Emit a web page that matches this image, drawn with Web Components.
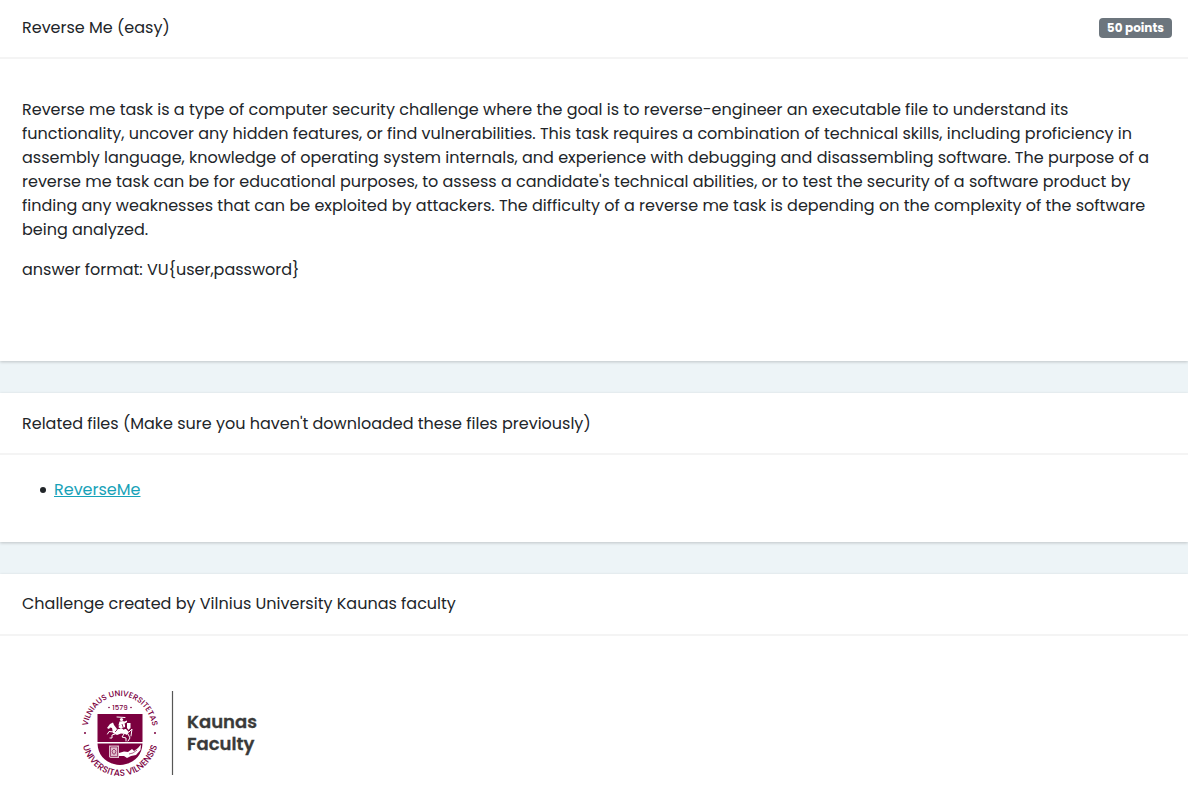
<!DOCTYPE html>
<html lang="en">
<head>
<meta charset="utf-8">
<title>Reverse Me (easy)</title>
<style>
body { margin: 0; background: #edf4f7; color: #212529; font: 16px/24px Poppins, Inter, "Open Sans", sans-serif; }
</style>
</head>
<body>
<challenge-page></challenge-page>

<template id="page-template">
  <style>
    :host { display: flex; flex-direction: column; gap: 32px; min-height: 100vh; }
    p { margin: 0 0 16px; }
    ul { margin: 0 0 16px; padding-left: 18px; list-style: none; }
    li { display: flex; align-items: center; gap: 8px; }
    li::before { content: ""; width: 6px; height: 6px; border-radius: 50%; background: currentColor; }
    a { color: #17a2b8; text-decoration: underline; }
    .description { padding: 17px 0 38px; }
    info-card:first-of-type { --header-padding: 16px 16px 17px 22px; }
    .files { --header-padding: 19px 16px 17px 22px; --body-padding: 23px 22px 24px; }
    info-card:last-of-type { flex: 1; }
    faculty-logo { margin: 22px 0 0 48px; }
  </style>
  <info-card>
    <span slot="title">Reverse Me (easy)</span>
    <points-badge slot="extra">50 points</points-badge>
    <div class="description">
      <p>Reverse me task is a type of computer security challenge where the goal is to reverse-engineer an executable file to understand its
      functionality, uncover any hidden features, or find vulnerabilities. This task requires a combination of technical skills, including proficiency in
      assembly language, knowledge of operating system internals, and experience with debugging and disassembling software. The purpose of a
      reverse me task can be for educational purposes, to assess a candidate's technical abilities, or to test the security of a software product by
      finding any weaknesses that can be exploited by attackers. The difficulty of a reverse me task is depending on the complexity of the software
      being analyzed.</p>
      <p>answer format: VU{user,password}</p>
    </div>
  </info-card>
  <info-card class="files">
    <span slot="title">Related files (Make sure you haven't downloaded these files previously)</span>
    <ul><li><a href="#ReverseMe">ReverseMe</a></li></ul>
  </info-card>
  <info-card>
    <span slot="title">Challenge created by Vilnius University Kaunas faculty</span>
    <faculty-logo></faculty-logo>
  </info-card>
</template>

<template id="card-template">
  <style>
    :host { display: block; background: #fff; box-shadow: 0 1px 3px rgba(0, 0, 0, .2); }
    header { display: flex; align-items: center; justify-content: space-between; padding: var(--header-padding, 18px 16px 18px 22px); border-bottom: 2px solid #f4f4f4; }
    section { padding: var(--body-padding, 22px 22px 25px); }
  </style>
  <header><slot name="title"></slot><slot name="extra"></slot></header>
  <section><slot></slot></section>
</template>

<template id="badge-template">
  <style>
    :host { display: block; padding: 0 8px; border-radius: 4px; background: #6c757d; color: #fff; font-size: 12px; font-weight: 700; line-height: 20px; }
  </style>
  <slot></slot>
</template>

<template id="logo-template">
  <style>
    :host { display: block; width: 200px; }
    svg { display: block; }
    .ring { font: 500 8px Poppins, Inter, sans-serif; fill: #7b003f; text-anchor: middle; }
    .motto { font-size: 9px; }
    .year { font-size: 7px; }
    .name { font: 600 18px Poppins, Inter, sans-serif; fill: #3a3a39; stroke: #3a3a39; stroke-width: .3px; }
  </style>
  <svg width="200" height="105" viewBox="0 0 200 105" role="img" aria-label="Vilnius University Kaunas Faculty">
    <defs>
      <path id="upper" d="M17 53A33 37 0 0 1 83 53"/>
      <path id="lower" d="M11 53A39 43 0 0 0 89 53"/>
    </defs>
    <g class="ring">
      <text><textPath href="#upper" startOffset="50%">VILNIAUS UNIVERSITETAS</textPath></text>
      <text class="motto"><textPath href="#lower" startOffset="50%">UNIVERSITAS VILNENSIS</textPath></text>
      <text class="year" x="50" y="30">1579</text>
      <circle cx="15" cy="53" r="1"/><circle cx="85" cy="53" r="1"/>
      <circle cx="39" cy="27.500" r=".8"/><circle cx="61" cy="27.500" r=".8"/>
    </g>
    <path fill="#7b003f" d="M27.500 34H72.500V62H27.500ZM27.500 63.500H72.500C72 77 62 84.500 50 85C38 84.500 28 77 27.500 63.500Z"/>
    <g fill="#fff">
      <circle cx="51.500" cy="39.500" r="1.600"/>
      <path d="M49.500 41.500L53.500 41L55 45L55 47L51 49L48 47ZM53 42L57 40.500L57 42L54 44Z"/>
      <path d="M37 48L40 44L43 42.500L44 45L47 49L56 49L59 52L57 55L55 54L51 53.500L47 55L43 53L42 48L40 47.500L39 49Z"/>
      <path d="M57 43H60.500V48L58.500 50L57 48Z"/>
    </g>
    <g fill="none" stroke="#fff" stroke-width="1" stroke-linecap="round" stroke-linejoin="round">
      <path d="M47 37L55 37.500M44 52L39 51.500L37.500 54M45 54L42 55L42 58L40 58M54 54L52 57L56 58L56 61M58 54L60 58L58 61M59 52L62 49L61 56"/>
    </g>
    <path fill="none" stroke="#7b003f" stroke-width=".8" d="M49 45L47 50L45 52M52 44L54 50"/>
    <path fill="#dfbdcd" d="M39 65.500H49V78H40.500L39 77Z"/>
    <path fill="#fff" d="M49 73L54 71.500L58 72L62 69L64 71L68 68L71 64.500L70.500 70L66 75L61 76L57 78L54 76L49 76Z"/>
    <path fill="none" stroke="#7b003f" stroke-width=".6" d="M40.500 67H47.500V76.500H40.500ZM42 71L44 69L46 71L45 74H43ZM59 74L63 73L67 70"/>
    <path stroke="#575756" stroke-width="1.200" d="M102.500 11V95"/>
    <text class="name" x="117" y="48">Kaunas</text>
    <text class="name" x="117" y="70">Faculty</text>
  </svg>
</template>

<script>
function define(name, templateId) {
  customElements.define(name, class extends HTMLElement {
    constructor() {
      super();
      this.attachShadow({ mode: "open" })
        .append(document.getElementById(templateId).content.cloneNode(true));
    }
  });
}
define("info-card", "card-template");
define("points-badge", "badge-template");
define("faculty-logo", "logo-template");
define("challenge-page", "page-template");
</script>
</body>
</html>
